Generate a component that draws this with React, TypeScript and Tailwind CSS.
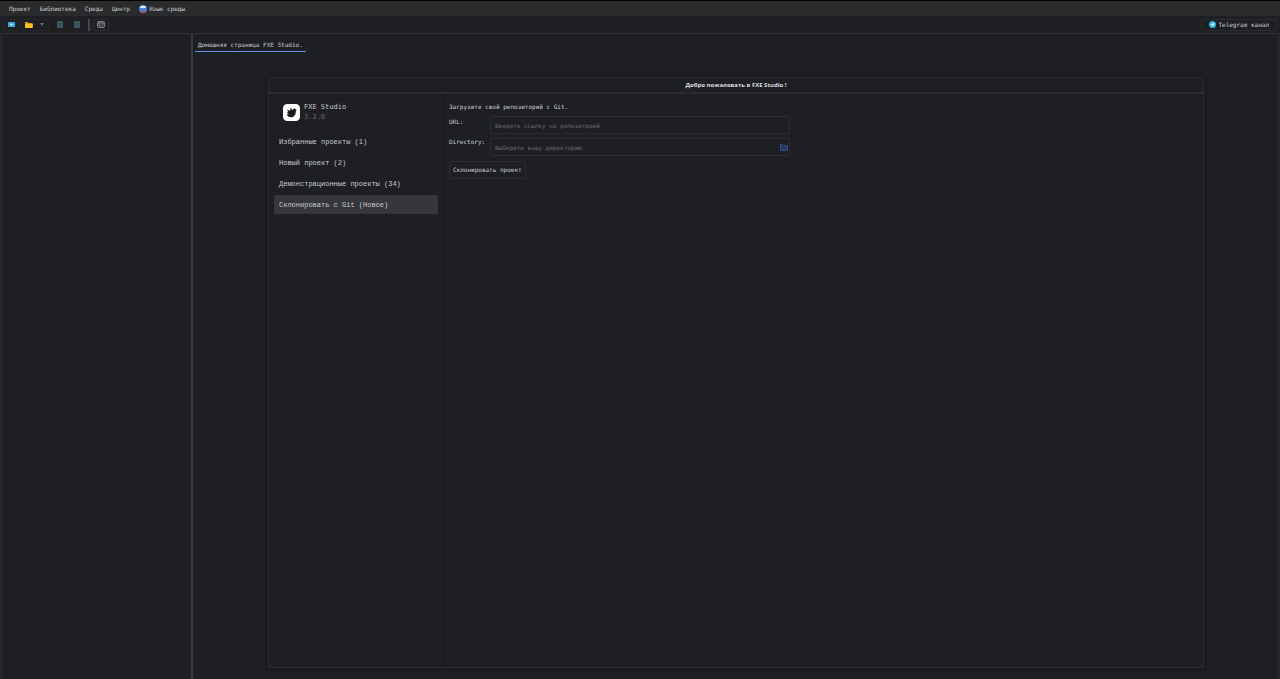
import React from 'react';

const menuItems = ['Проект', 'Библиотека', 'Среда', 'Центр'];

const projectTabs = [
  { label: 'Избранные проекты (1)', active: false },
  { label: 'Новый проект (2)', active: false },
  { label: 'Демонстрационные проекты (34)', active: false },
  { label: 'Склонировать с Git (Новое)', active: true },
];

const GlobeIcon = () => (
  <svg viewBox="0 0 16 16" className="w-2 h-2 shrink-0">
    <circle cx="8" cy="8" r="8" fill="#3f7fd6" />
    <path d="M1 5A8 8 0 0 1 15 5Q8 8 1 5Z" fill="#dce9f7" />
    <path d="M3 14Q9 10 14.500 12.500A8 8 0 0 1 3 14Z" fill="#c4524f" />
  </svg>
);

const NewProjectIcon = () => (
  <svg viewBox="0 0 14 10" className="w-[7px] h-[5px]">
    <rect width="14" height="10" rx="1" fill="#3fa9dc" />
    <path d="M7 3v4M5 5h4" stroke="#e4f5ff" strokeWidth="2" />
  </svg>
);

const OpenFolderIcon = () => (
  <svg viewBox="0 0 16 12" className="w-2 h-[6px]">
    <path d="M0 0h6l1.500 2H15v10H0Z" fill="#dc9a10" />
    <path d="M1 4h15l-1 8H0Z" fill="#fbc02a" />
  </svg>
);

const SaveIcon = () => (
  <svg viewBox="0 0 12 14" className="w-[6px] h-[7px]">
    <rect width="12" height="14" rx="2" fill="#3c5963" />
    <path d="M3 5h6M3 9h6" stroke="#2f4750" strokeWidth="1.500" />
  </svg>
);

const TerminalIcon = () => (
  <svg viewBox="0 0 16 14" className="w-2 h-[7px]" fill="none" stroke="#96989b" strokeWidth="1.500">
    <rect x="1" y="1" width="14" height="12" rx="2" fill="#45474a" />
    <path d="M2 4h12M4 7l2 1.500" />
  </svg>
);

const TelegramIcon = () => (
  <svg viewBox="0 0 16 16" className="w-[7px] h-[7px] shrink-0">
    <circle cx="8" cy="8" r="8" fill="#35b5e5" />
    <path d="M3 8l9-4-1.500 8-3-2-1.500 1.500V9Z" fill="#d8f3fd" />
  </svg>
);

const FolderIcon = () => (
  <svg viewBox="0 0 16 14" className="w-2 h-[7px]" fill="#243763" stroke="#3d5aa0" strokeWidth="1.500">
    <path d="M1 1.500h5l2 2h7v9.500H1Z" />
  </svg>
);

const Logo = () => (
  <svg viewBox="0 0 32 32" className="w-[17px] h-[17px] shrink-0">
    <rect width="32" height="32" rx="8" fill="#fff" />
    <path
      d="M8 10c2 2 4 3 6 2 0-2 0-3-1-5 3 1 4 3 4 5 1-2 3-3 5-3l1-2v3l3 1c-1 1-2 2-2 4 0 6-4 10-9 10-4 0-7-2-8-6 2 1 3 1 4 0-2-1-3-2-3-4h2c-1-1-2-3-2-5Z"
      fill="#17191c"
    />
  </svg>
);

const App = () => {
  return (
    <div className="h-screen flex flex-col overflow-hidden bg-[#1e1f22] border-t border-black text-[#c9cbcf] text-[6px] leading-[8px] font-['DejaVu_Sans_Mono','Liberation_Mono',monospace]">
      {/* Menu bar */}
      <nav className="h-[15px] shrink-0 flex items-center gap-[9px] px-[9px] bg-[#2a2b2d]">
        {menuItems.map((item) => (
          <button key={item}>{item}</button>
        ))}
        <button className="flex items-center gap-0.5">
          <GlobeIcon />
          Язык среды
        </button>
      </nav>

      {/* Toolbar */}
      <header className="h-[18px] shrink-0 flex items-center justify-between border-b border-[#2f3134] pl-[3px] pr-[3px]">
        <div className="flex items-center">
          <button aria-label="Новый проект" className="w-4 h-3 flex items-center justify-center rounded-xs border border-[#26282b]">
            <NewProjectIcon />
          </button>
          <div className="ml-0.5 flex h-3 rounded-xs border border-[#26282b]">
            <button aria-label="Открыть проект" className="w-3.5 flex items-center justify-center">
              <OpenFolderIcon />
            </button>
            <button aria-label="Недавние проекты" className="w-3 flex items-center justify-center">
              <svg viewBox="0 0 8 6" className="w-1 h-[3px]">
                <path d="M0 0h8L4 6Z" fill="#6a6c6f" />
              </svg>
            </button>
          </div>
          <button aria-label="Сохранить" className="ml-[3px] w-[15px] flex justify-center">
            <SaveIcon />
          </button>
          <button aria-label="Сохранить все" className="ml-0.5 w-[15px] flex justify-center">
            <SaveIcon />
          </button>
          <div className="ml-1 w-0.5 h-3 bg-[#45474a]"></div>
          <button aria-label="Терминал" className="ml-[3px] w-4 h-3 flex items-center justify-center rounded-xs border border-[#2d2f32]">
            <TerminalIcon />
          </button>
        </div>
        <button className="h-3 px-[7px] flex items-center gap-0.5 rounded-xs border border-[#2a2c2f]">
          <TelegramIcon />
          Telegram канал
        </button>
      </header>

      {/* Workspace */}
      <div className="flex-1 min-h-0 flex border-x-2 border-[#27282b]">
        <aside className="w-[191px] shrink-0 border-r-2 border-[#3a3b3e]"></aside>
        <main className="flex-1 min-w-0 flex flex-col pb-[11px]">
          <div className="h-[18px] shrink-0 flex items-end px-0.5">
            <button className="h-3 px-[3px] pb-0.5 border-b border-[#6496e4]">Домашняя страница FXE Studio.</button>
          </div>

          <section className="mt-[25px] ml-[75px] mr-[74px] flex-1 min-h-0 flex flex-col rounded-t border border-[#2c2e31] shadow-[0_0_3px_#111214]">
            <h1 className="h-4 shrink-0 flex items-center justify-center border-b-2 border-[#292b2e] font-['Open_Sans','Noto_Sans',sans-serif] font-bold text-[#dcdde0]">
              Добро пожаловать в FXE Studio !
            </h1>
            <div className="flex-1 flex">
              <div className="w-[176px] shrink-0 px-[5px] pt-2 border-r-2 border-[#191a1c]">
                <div className="flex items-center gap-1 pl-[9px]">
                  <Logo />
                  <div className="text-[7px] leading-[10px]">
                    <p>FXE Studio</p>
                    <p className="text-[#68696d]">3.2.0</p>
                  </div>
                </div>
                <ul className="mt-2.5 flex flex-col gap-0.5">
                  {projectTabs.map((tab) => (
                    <li key={tab.label}>
                      <button
                        className={`w-full h-[19px] px-[5px] rounded-xs text-left text-[7px] font-['Liberation_Mono',monospace] ${
                          tab.active ? 'bg-[#36373c]' : ''
                        }`}
                      >
                        {tab.label}
                      </button>
                    </li>
                  ))}
                </ul>
              </div>

              {/* Clone form */}
              <form className="flex-1 min-w-0 pt-[9px] pl-1">
                <p>Загрузите свой репозиторий с Git.</p>
                <div className="mt-[5px] max-w-[341px] flex items-start">
                  <label htmlFor="url" className="w-[41px] shrink-0 pt-0.5">
                    URL:
                  </label>
                  <input
                    id="url"
                    type="text"
                    placeholder="Введите ссылку на репозиторий"
                    className="flex-1 min-w-0 h-[18px] px-1 rounded-xs border border-[#2a2c2f] placeholder:text-[#66676b] outline-none"
                  />
                </div>
                <div className="mt-1 max-w-[341px] flex items-start">
                  <label htmlFor="directory" className="w-[41px] shrink-0">
                    Directory:
                  </label>
                  <div className="flex-1 min-w-0 h-[18px] flex items-center pr-px rounded-xs border border-[#2a2c2f]">
                    <input
                      id="directory"
                      type="text"
                      placeholder="Выберите вашу директорию"
                      className="flex-1 min-w-0 h-4 px-1 placeholder:text-[#66676b] outline-none"
                    />
                    <button type="button" aria-label="Выбрать директорию">
                      <FolderIcon />
                    </button>
                  </div>
                </div>
                <button type="button" className="mt-[5px] h-[18px] px-[3px] rounded-xs border border-[#2a2c2f]">
                  Склонировать проект
                </button>
              </form>
            </div>
          </section>
        </main>
      </div>
    </div>
  );
};

export default App;
